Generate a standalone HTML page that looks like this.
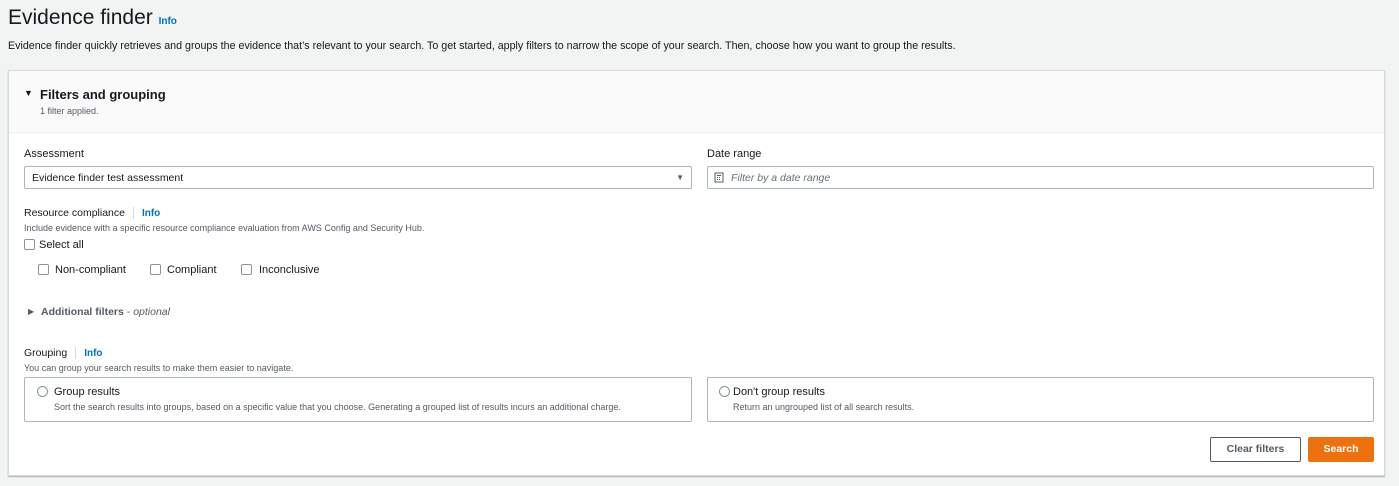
<!DOCTYPE html>
<html><head><meta charset="utf-8"><style>
*{box-sizing:border-box;margin:0;padding:0}
body{width:1399px;height:486px;background:#f2f3f3;font-family:"Liberation Sans",sans-serif;color:#16191f;position:relative;overflow:hidden}
.abs{position:absolute;white-space:nowrap}
.info{color:#0073bb;font-weight:bold;font-size:10px}
.card{position:absolute;left:8px;top:70px;width:1377px;height:406px;background:#fff;border:1px solid #d5dbdb;box-shadow:0 1px 1px rgba(0,28,36,.3)}
.hdr{position:absolute;left:0;top:0;width:100%;height:62px;background:#fafafa;border-bottom:1px solid #eaeded}
.lbl{font-size:11px;color:#16191f}
.input{position:absolute;height:23px;border:1px solid #aab7b8;border-radius:2px;background:#fff}
.cb{position:absolute;width:11px;height:11px;border:1px solid #879596;border-radius:2px;background:#fff}
.small{font-size:9px;color:#545b64}
.tile{position:absolute;height:45px;border:1px solid #aab7b8;border-radius:2px;background:#fff}
.radio{position:absolute;width:11px;height:11px;border:1px solid #879596;border-radius:50%}
.sep{display:inline-block;width:1px;height:12px;background:#d5dbdb;vertical-align:middle;margin:0 8px}
</style></head><body>
<div class="abs" style="left:8px;top:5px;font-size:21px;line-height:26px">Evidence finder <span class="info">Info</span></div>
<div class="abs" style="left:8px;top:40px;font-size:10.7px;color:#16191f">Evidence finder quickly retrieves and groups the evidence that’s relevant to your search. To get started, apply filters to narrow the scope of your search. Then, choose how you want to group the results.</div>
<div class="card">
 <div class="hdr">
  <div class="abs" style="left:15px;top:17px;font-size:9px">▼</div>
  <div class="abs" style="left:31px;top:16px;font-size:13px;font-weight:bold">Filters and grouping</div>
  <div class="abs small" style="left:31px;top:35px;color:#545b64">1 filter applied.</div>
 </div>
 <div class="abs lbl" style="left:15px;top:77px">Assessment</div>
 <div class="input" style="left:15px;top:95px;width:668px"><span class="abs" style="left:7px;top:5px;font-size:10.5px">Evidence finder test assessment</span><span class="abs" style="right:7px;top:6px;font-size:8px;color:#545b64">▼</span></div>
 <div class="abs lbl" style="left:698px;top:77px">Date range</div>
 <div class="input" style="left:698px;top:95px;width:667px">
  <svg class="abs" style="left:6px;top:5px" width="10" height="11" viewBox="0 0 10 11"><rect x="1" y="1" width="8" height="9" fill="none" stroke="#545b64"/><path d="M3 3.5h4M3 5.5h1M5 5.5h1M7 5.5h0M3 7.5h1M5 7.5h1" stroke="#545b64"/></svg>
  <span class="abs" style="left:23px;top:5px;font-size:10.5px;font-style:italic;color:#687078">Filter by a date range</span></div>
 <div class="abs lbl" style="left:15px;top:136px;font-size:10.5px">Resource compliance<span class="sep"></span><span class="info">Info</span></div>
 <div class="abs small" style="left:15px;top:152px">Include evidence with a specific resource compliance evaluation from AWS Config and Security Hub.</div>
 <div class="cb" style="left:15px;top:168px"></div><div class="abs lbl" style="left:30px;top:168px">Select all</div>
 <div class="cb" style="left:29px;top:193px"></div><div class="abs lbl" style="left:46px;top:193px">Non-compliant</div>
 <div class="cb" style="left:141px;top:193px"></div><div class="abs lbl" style="left:158px;top:193px">Compliant</div>
 <div class="cb" style="left:232px;top:193px"></div><div class="abs lbl" style="left:250px;top:193px">Inconclusive</div>
 <div class="abs" style="left:19px;top:236px;font-size:8px;color:#545b64">▶</div>
 <div class="abs" style="left:32px;top:235px;font-size:10.5px;font-weight:bold;color:#545b64">Additional filters <span style="font-weight:normal">- <i>optional</i></span></div>
 <div class="abs lbl" style="left:15px;top:276px;font-size:10.5px">Grouping<span class="sep"></span><span class="info">Info</span></div>
 <div class="abs small" style="left:15px;top:292px">You can group your search results to make them easier to navigate.</div>
 <div class="tile" style="left:15px;top:306px;width:668px"><div class="radio" style="left:12px;top:8px"></div><div class="abs lbl" style="left:29px;top:8px">Group results</div><div class="abs small" style="left:29px;top:24px">Sort the search results into groups, based on a specific value that you choose. Generating a grouped list of results incurs an additional charge.</div></div>
 <div class="tile" style="left:698px;top:306px;width:667px"><div class="radio" style="left:11px;top:8px"></div><div class="abs lbl" style="left:25px;top:8px">Don't group results</div><div class="abs small" style="left:25px;top:24px">Return an ungrouped list of all search results.</div></div>
 <div class="abs" style="left:1201px;top:366px;width:91px;height:25px;border:1px solid #545b64;border-radius:2px;font-size:10.5px;font-weight:bold;color:#545b64;text-align:center;line-height:23px">Clear filters</div>
 <div class="abs" style="left:1299px;top:366px;width:66px;height:25px;background:#ec7211;border-radius:2px;font-size:10.5px;font-weight:bold;color:#fff;text-align:center;line-height:25px">Search</div>
</div>
</body></html>
